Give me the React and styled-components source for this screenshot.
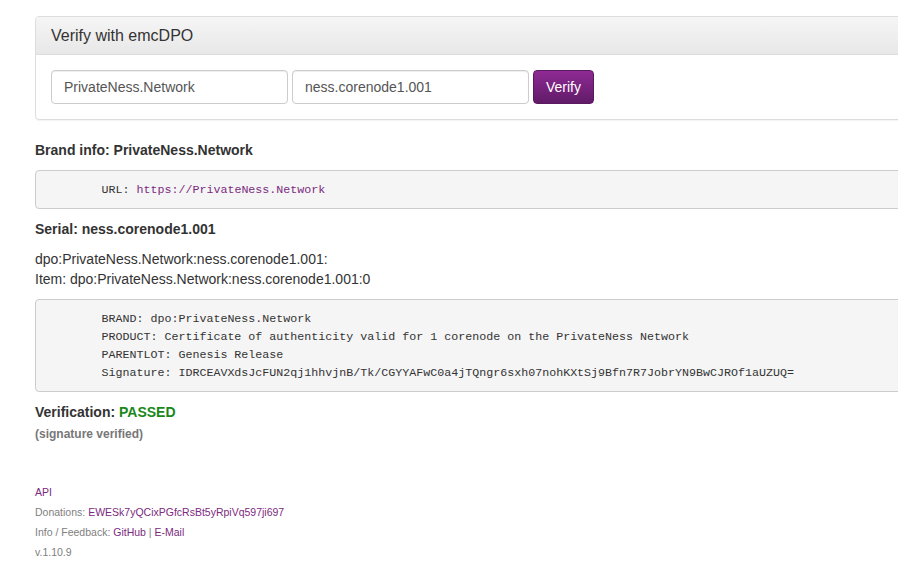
import React from "react";
import styled, { createGlobalStyle } from "styled-components";

const GlobalStyle = createGlobalStyle`
  html, body {
    margin: 0;
    padding: 0;
    background: #fff;
    overflow: hidden;
  }
  body {
    font-family: "Liberation Sans", Arial, sans-serif;
    font-size: 14px;
    line-height: 20px;
    color: #333;
  }
`;

const SIGNATURE =
  "IDRCEAVXdsJcFUN2qj1hhvjnB/Tk/CGYYAFwC0a4jTQngr6sxh07nohKXtSj9Bfn7R7JobrYN9BwCJROf1aUZUQ=";

const App = () => {
  return (
    <>
      <GlobalStyle />
      <Page>
        <Panel>
          <PanelHeading>Verify with emcDPO</PanelHeading>
          <PanelBody>
            <Field defaultValue="PrivateNess.Network" />
            <Field defaultValue="ness.corenode1.001" />
            <VerifyButton>Verify</VerifyButton>
          </PanelBody>
        </Panel>

        <Heading>Brand info: PrivateNess.Network</Heading>
        <Pre>
          {"\tURL: "}
          <Link href="#">https://PrivateNess.Network</Link>
        </Pre>

        <Heading>Serial: ness.corenode1.001</Heading>
        <Text>
          dpo:PrivateNess.Network:ness.corenode1.001:
          <br />
          Item: dpo:PrivateNess.Network:ness.corenode1.001:0
        </Text>
        <Pre>
          {"\tBRAND: dpo:PrivateNess.Network\n"}
          {"\tPRODUCT: Certificate of authenticity valid for 1 corenode on the PrivateNess Network\n"}
          {"\tPARENTLOT: Genesis Release\n"}
          {"\tSignature: " + SIGNATURE}
        </Pre>

        <Heading $tight>
          Verification: <Passed>PASSED</Passed>
        </Heading>
        <Note>(signature verified)</Note>

        <Footer>
          <div>
            <Link href="#">API</Link>
          </div>
          <div>
            Donations: <Link href="#">EWESk7yQCixPGfcRsBt5yRpiVq597ji697</Link>
          </div>
          <div>
            Info / Feedback: <Link href="#">GitHub</Link> | <Link href="#">E-Mail</Link>
          </div>
          <div>v.1.10.9</div>
        </Footer>
      </Page>
    </>
  );
};

const Page = styled.div`
  width: 1100px;
  padding: 16px 0 0 35px;
`;

const Panel = styled.div`
  border: 1px solid #ddd;
  border-radius: 4px;
  box-shadow: 0 1px 1px rgba(0, 0, 0, 0.05);
  margin-bottom: 20px;
`;

const PanelHeading = styled.div`
  padding: 9px 15px;
  font-size: 16px;
  line-height: 19px;
  color: #333;
  background-image: linear-gradient(to bottom, #f5f5f5 0%, #e8e8e8 100%);
  border-bottom: 1px solid #ddd;
  border-radius: 3px 3px 0 0;
`;

const PanelBody = styled.div`
  padding: 15px;
  display: flex;
  gap: 4px;
`;

const Field = styled.input`
  width: 237px;
  height: 34px;
  box-sizing: border-box;
  padding: 6px 12px;
  border: 1px solid #ccc;
  border-radius: 4px;
  font-family: "Liberation Sans", Arial, sans-serif;
  font-size: 14px;
  color: #555;
  box-shadow: inset 0 1px 1px rgba(0, 0, 0, 0.075);
  outline: none;
`;

const VerifyButton = styled.button`
  width: 61px;
  height: 34px;
  border: 1px solid #5a1a60;
  border-radius: 4px;
  background-image: linear-gradient(to bottom, #8e2a94 0%, #611b68 100%);
  color: #fff;
  font-family: "Liberation Sans", Arial, sans-serif;
  font-size: 14px;
  cursor: pointer;
`;

const Heading = styled.h4`
  margin: 0 0 ${(p) => (p.$tight ? "4px" : "10px")};
  font-size: 14px;
  line-height: 20px;
  font-weight: bold;
  color: #333;
`;

const Passed = styled.span`
  color: #1a871a;
`;

const Text = styled.p`
  margin: 0 0 10px;
`;

const Pre = styled.pre`
  margin: 0 0 10px;
  padding: 9.5px;
  font-family: "Liberation Mono", "DejaVu Sans Mono", monospace;
  font-size: 11.67px;
  line-height: 18px;
  color: #333;
  background: #f5f5f5;
  border: 1px solid #ccc;
  border-radius: 4px;
  tab-size: 8;
  white-space: pre;
`;

const Link = styled.a`
  color: #7b2a80;
  text-decoration: none;
`;

const Note = styled.div`
  font-size: 12px;
  line-height: 16px;
  font-weight: bold;
  color: #777;
`;

const Footer = styled.div`
  margin-top: 40px;
  font-size: 10.5px;
  line-height: 20px;
  color: #808080;
`;

export default App;
